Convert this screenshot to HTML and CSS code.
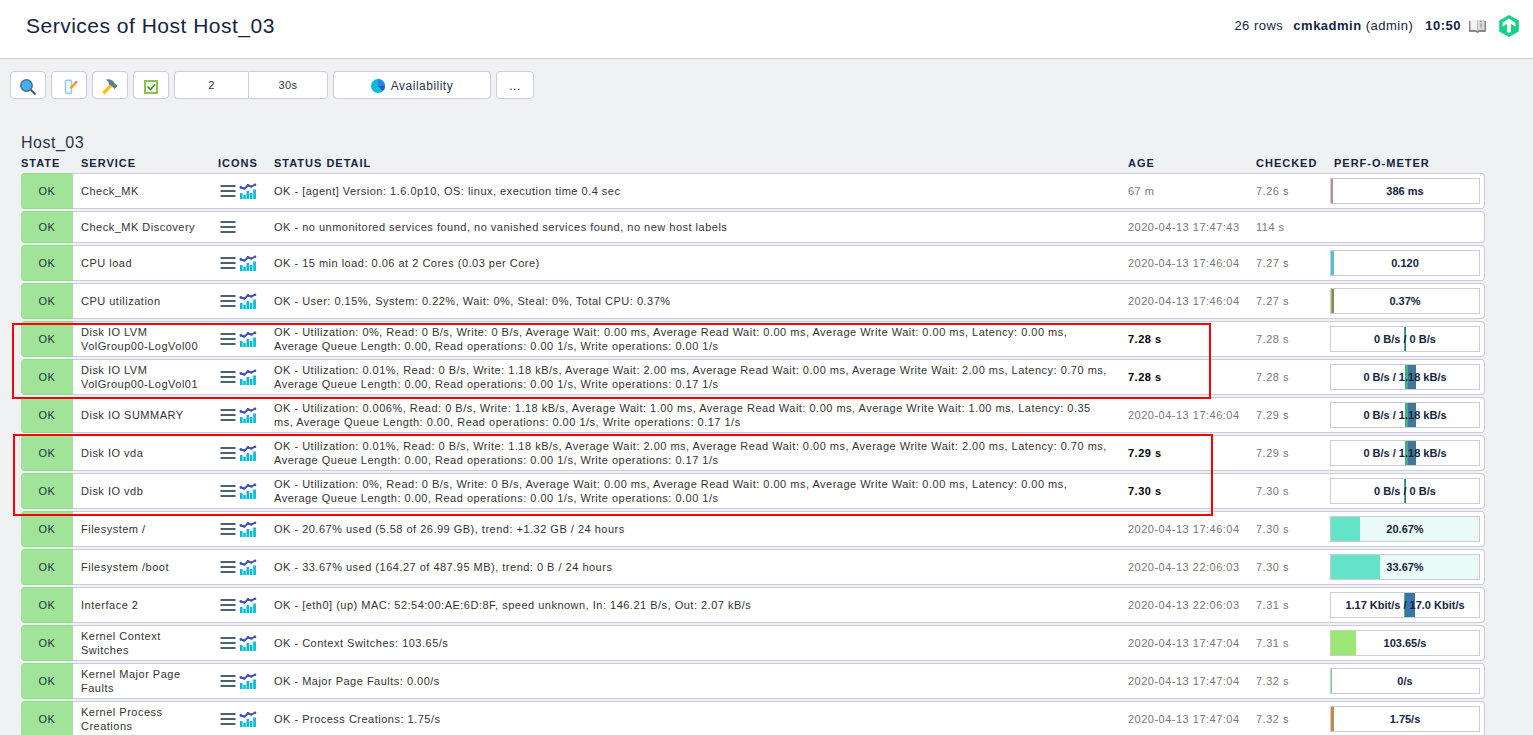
FILE: index.html
```html
<!DOCTYPE html>
<html lang="en">
<head>
<meta charset="utf-8">
<title>Services of Host Host_03</title>
<link rel="stylesheet" href="styles.css">
</head>
<body>
<svg class="sprite" aria-hidden="true">
  <symbol id="menu" viewBox="0 0 16 16"><path d="M0.5 3h15M0.5 8h15M0.5 13h15" stroke="#4b636e" stroke-width="2" fill="none"/></symbol>
  <symbol id="graph" viewBox="0 0 18 18"><path d="M1 11h2.600v6H1zM4.300 13h2.500v4H4.300zM7.500 9h2.600v8H7.500zM10.900 11h2.500v6h-2.500zM14.200 7.500h2.700v9.500h-2.700z" fill="#00bcd4"/><path d="M1.500 5.500l4 1L9 3.500l3.400 1L16.500 2.500" fill="none" stroke="#3f51b5" stroke-width="1.900"/><g fill="#3f51b5"><circle cx="1.800" cy="5.400" r="1.300"/><circle cx="5.300" cy="6.500" r="1.300"/><circle cx="9" cy="3.500" r="1.400"/><circle cx="12.400" cy="4.500" r="1.300"/><circle cx="16" cy="2.700" r="1.300"/></g></symbol>
</svg>
<div class="page">
<header class="topbar">
  <h1>Services of Host Host_03</h1>
  <div class="userinfo">
    <span class="rows">26 rows</span>
    <span class="user"><b>cmkadmin</b> (admin)</span>
    <b class="clock">10:50</b>
    <a href="#" class="manual" aria-label="Manual"><svg width="19" height="16" viewBox="0 0 19 16"><path d="M1 3h17v11h-7l-1 1H9l-1-1H1z" fill="#8a8a8a"/><path d="M2.500 1.500q4-.5 7 1v10q-3-1-7-.5z" fill="#f3f3f3"/><path d="M9.500 2.500q3-1.500 7-1V12q-4-.5-7 .5z" fill="#dcdcdc"/><path d="M12 3.500h2M13 5.500v4" stroke="#999" stroke-width="1.300"/><path d="M9.500 2.500v10" stroke="#bbb" stroke-width="1"/></svg></a>
    <a href="#" class="logo" aria-label="Checkmk"><svg width="20" height="22" viewBox="0 0 20 22"><path d="M10 0l9.800 5.500v11L10 22 .2 16.500v-11z" fill="#13d389"/><path d="M10 3.500l6.500 4.200v4l-4.500-3v8l-2 1.300-2-1.300v-8l-4.500 3v-4z" fill="#fff"/></svg></a>
  </div>
</header>
<nav class="toolbar" aria-label="View options">
  <button class="btn" type="button" aria-label="Filter"><svg width="18" height="18" viewBox="0 0 18 18"><path d="M11 11l5.500 5.500" stroke="#455a64" stroke-width="2"/><circle cx="7.500" cy="7.500" r="5.700" fill="#42b0f8" stroke="#546e7a" stroke-width="1.500"/></svg></button>
  <button class="btn" type="button" aria-label="Edit view"><svg width="18" height="18" viewBox="0 0 18 18"><rect x="5.500" y="2.200" width="6" height="13" rx="1" fill="#f1faff" stroke="#90cdf9" stroke-width="1.600"/><path d="M10.500 10.500l5-5.500" stroke="#ff9800" stroke-width="2.400"/><path d="M15.300 5.200l1.700-2" stroke="#c98a8a" stroke-width="2.400"/></svg></button>
  <button class="btn" type="button" aria-label="Commands"><svg width="18" height="18" viewBox="0 0 18 18"><path d="M2.500 15.300l7.500-8" stroke="#ffc107" stroke-width="3.400"/><path d="M5 1.500q6-1 8.500 3.500l3 3-3 3-3-3.200L8 6.500Q8 3.500 5 1.500z" fill="#607d8b"/></svg></button>
  <button class="btn" type="button" aria-label="Checkboxes"><svg width="18" height="18" viewBox="0 0 18 18"><rect x="3" y="3" width="12" height="12" fill="#f1f8e9" stroke="#8bc34a" stroke-width="2"/><path d="M5.500 8.500l3 3 4.500-5" fill="none" stroke="#43903e" stroke-width="1.600"/></svg></button>
  <div class="split">
    <button type="button">2</button>
    <button type="button">30s</button>
  </div>
  <button class="btn wide" type="button"><svg width="14" height="14" viewBox="0 0 14 14"><circle cx="7" cy="7" r="7" fill="#00bcd4"/><path d="M7 7V0a7 7 0 0 1 7 7z" fill="#1e88f5"/><path d="M7 7h7a7 7 0 0 1-2.100 5z" fill="#3f51b5"/></svg>Availability</button>
  <button class="btn more" type="button">...</button>
</nav>
<main class="content">
<h2>Host_03</h2>
<div class="listing">
<table>
<colgroup><col class="c-state"><col class="c-service"><col class="c-icons"><col><col class="c-age"><col class="c-checked"><col class="c-perf"></colgroup>
<thead><tr><th>State</th><th>Service</th><th>Icons</th><th>Status detail</th><th>Age</th><th>Checked</th><th>Perf-O-Meter</th></tr></thead>
<tbody>
<tr><td class="state">OK</td><td>Check_MK</td><td class="icons"><a href="#" aria-label="Menu"><svg><use href="#menu"/></svg></a><a href="#" aria-label="Graphs"><svg class="g"><use href="#graph"/></svg></a></td><td>OK - [agent] Version: 1.6.0p10, OS: linux, execution time 0.4 sec</td><td class="time">67 m</td><td class="time">7.26 s</td><td class="perf"><div class="meter"><i class="mauve" style="width:1.4%"></i><span>386 ms</span></div></td></tr>
<tr><td class="state">OK</td><td>Check_MK Discovery</td><td class="icons"><a href="#" aria-label="Menu"><svg><use href="#menu"/></svg></a></td><td>OK - no unmonitored services found, no vanished services found, no new host labels</td><td class="time">2020-04-13 17:47:43</td><td class="time">114 s</td><td class="perf"></td></tr>
<tr><td class="state">OK</td><td>CPU load</td><td class="icons"><a href="#" aria-label="Menu"><svg><use href="#menu"/></svg></a><a href="#" aria-label="Graphs"><svg class="g"><use href="#graph"/></svg></a></td><td>OK - 15 min load: 0.06 at 2 Cores (0.03 per Core)</td><td class="time">2020-04-13 17:46:04</td><td class="time">7.27 s</td><td class="perf"><div class="meter"><i class="sky" style="width:2%"></i><span>0.120</span></div></td></tr>
<tr><td class="state">OK</td><td>CPU utilization</td><td class="icons"><a href="#" aria-label="Menu"><svg><use href="#menu"/></svg></a><a href="#" aria-label="Graphs"><svg class="g"><use href="#graph"/></svg></a></td><td>OK - User: 0.15%, System: 0.22%, Wait: 0%, Steal: 0%, Total CPU: 0.37%</td><td class="time">2020-04-13 17:46:04</td><td class="time">7.27 s</td><td class="perf"><div class="meter"><i class="olive" style="width:0.7%"></i><i class="rust" style="width:0.7%"></i><i class="green" style="width:0.7%"></i><span>0.37%</span></div></td></tr>
<tr><td class="state">OK</td><td>Disk IO LVM VolGroup00-LogVol00</td><td class="icons"><a href="#" aria-label="Menu"><svg><use href="#menu"/></svg></a><a href="#" aria-label="Graphs"><svg class="g"><use href="#graph"/></svg></a></td><td>OK - Utilization: 0%, Read: 0 B/s, Write: 0 B/s, Average Wait: 0.00 ms, Average Read Wait: 0.00 ms, Average Write Wait: 0.00 ms, Latency: 0.00 ms, Average Queue Length: 0.00, Read operations: 0.00 1/s, Write operations: 0.00 1/s</td><td class="recent">7.28 s</td><td class="time">7.28 s</td><td class="perf"><div class="meter"><i style="width:49.3%"></i><i class="green" style="width:0.7%"></i><i class="blue" style="width:0.7%"></i><span>0 B/s / 0 B/s</span></div></td></tr>
<tr><td class="state">OK</td><td>Disk IO LVM VolGroup00-LogVol01</td><td class="icons"><a href="#" aria-label="Menu"><svg><use href="#menu"/></svg></a><a href="#" aria-label="Graphs"><svg class="g"><use href="#graph"/></svg></a></td><td>OK - Utilization: 0.01%, Read: 0 B/s, Write: 1.18 kB/s, Average Wait: 2.00 ms, Average Read Wait: 0.00 ms, Average Write Wait: 2.00 ms, Latency: 0.70 ms, Average Queue Length: 0.00, Read operations: 0.00 1/s, Write operations: 0.17 1/s</td><td class="recent">7.28 s</td><td class="time">7.28 s</td><td class="perf"><div class="meter"><i style="width:50%"></i><i class="green" style="width:2%"></i><i class="blue" style="width:5.4%"></i><span>0 B/s / 1.18 kB/s</span></div></td></tr>
<tr><td class="state">OK</td><td>Disk IO SUMMARY</td><td class="icons"><a href="#" aria-label="Menu"><svg><use href="#menu"/></svg></a><a href="#" aria-label="Graphs"><svg class="g"><use href="#graph"/></svg></a></td><td>OK - Utilization: 0.006%, Read: 0 B/s, Write: 1.18 kB/s, Average Wait: 1.00 ms, Average Read Wait: 0.00 ms, Average Write Wait: 1.00 ms, Latency: 0.35 ms, Average Queue Length: 0.00, Read operations: 0.00 1/s, Write operations: 0.17 1/s</td><td class="time">2020-04-13 17:46:04</td><td class="time">7.29 s</td><td class="perf"><div class="meter"><i style="width:50%"></i><i class="green" style="width:2%"></i><i class="blue" style="width:5.4%"></i><span>0 B/s / 1.18 kB/s</span></div></td></tr>
<tr><td class="state">OK</td><td>Disk IO vda</td><td class="icons"><a href="#" aria-label="Menu"><svg><use href="#menu"/></svg></a><a href="#" aria-label="Graphs"><svg class="g"><use href="#graph"/></svg></a></td><td>OK - Utilization: 0.01%, Read: 0 B/s, Write: 1.18 kB/s, Average Wait: 2.00 ms, Average Read Wait: 0.00 ms, Average Write Wait: 2.00 ms, Latency: 0.70 ms, Average Queue Length: 0.00, Read operations: 0.00 1/s, Write operations: 0.17 1/s</td><td class="recent">7.29 s</td><td class="time">7.29 s</td><td class="perf"><div class="meter"><i style="width:50%"></i><i class="green" style="width:2%"></i><i class="blue" style="width:5.4%"></i><span>0 B/s / 1.18 kB/s</span></div></td></tr>
<tr><td class="state">OK</td><td>Disk IO vdb</td><td class="icons"><a href="#" aria-label="Menu"><svg><use href="#menu"/></svg></a><a href="#" aria-label="Graphs"><svg class="g"><use href="#graph"/></svg></a></td><td>OK - Utilization: 0%, Read: 0 B/s, Write: 0 B/s, Average Wait: 0.00 ms, Average Read Wait: 0.00 ms, Average Write Wait: 0.00 ms, Latency: 0.00 ms, Average Queue Length: 0.00, Read operations: 0.00 1/s, Write operations: 0.00 1/s</td><td class="recent">7.30 s</td><td class="time">7.30 s</td><td class="perf"><div class="meter"><i style="width:49.3%"></i><i class="green" style="width:0.7%"></i><i class="blue" style="width:0.7%"></i><span>0 B/s / 0 B/s</span></div></td></tr>
<tr><td class="state">OK</td><td>Filesystem /</td><td class="icons"><a href="#" aria-label="Menu"><svg><use href="#menu"/></svg></a><a href="#" aria-label="Graphs"><svg class="g"><use href="#graph"/></svg></a></td><td>OK - 20.67% used (5.58 of 26.99 GB), trend: +1.32 GB / 24 hours</td><td class="time">2020-04-13 17:46:04</td><td class="time">7.30 s</td><td class="perf"><div class="meter disk"><i class="aqua" style="width:19.6%"></i><span>20.67%</span></div></td></tr>
<tr><td class="state">OK</td><td>Filesystem /boot</td><td class="icons"><a href="#" aria-label="Menu"><svg><use href="#menu"/></svg></a><a href="#" aria-label="Graphs"><svg class="g"><use href="#graph"/></svg></a></td><td>OK - 33.67% used (164.27 of 487.95 MB), trend: 0 B / 24 hours</td><td class="time">2020-04-13 22:06:03</td><td class="time">7.30 s</td><td class="perf"><div class="meter disk"><i class="aqua" style="width:33.1%"></i><span>33.67%</span></div></td></tr>
<tr><td class="state">OK</td><td>Interface 2</td><td class="icons"><a href="#" aria-label="Menu"><svg><use href="#menu"/></svg></a><a href="#" aria-label="Graphs"><svg class="g"><use href="#graph"/></svg></a></td><td>OK - [eth0] (up) MAC: 52:54:00:AE:6D:8F, speed unknown, In: 146.21 B/s, Out: 2.07 kB/s</td><td class="time">2020-04-13 22:06:03</td><td class="time">7.31 s</td><td class="perf"><div class="meter"><i style="width:49.3%"></i><i class="leaf" style="width:0.7%"></i><i class="azure" style="width:6.8%"></i><span>1.17 Kbit/s / 17.0 Kbit/s</span></div></td></tr>
<tr><td class="state">OK</td><td>Kernel Context Switches</td><td class="icons"><a href="#" aria-label="Menu"><svg><use href="#menu"/></svg></a><a href="#" aria-label="Graphs"><svg class="g"><use href="#graph"/></svg></a></td><td>OK - Context Switches: 103.65/s</td><td class="time">2020-04-13 17:47:04</td><td class="time">7.31 s</td><td class="perf"><div class="meter"><i class="lime" style="width:16.9%"></i><span>103.65/s</span></div></td></tr>
<tr><td class="state">OK</td><td>Kernel Major Page Faults</td><td class="icons"><a href="#" aria-label="Menu"><svg><use href="#menu"/></svg></a><a href="#" aria-label="Graphs"><svg class="g"><use href="#graph"/></svg></a></td><td>OK - Major Page Faults: 0.00/s</td><td class="time">2020-04-13 17:47:04</td><td class="time">7.32 s</td><td class="perf"><div class="meter"><i class="mint" style="width:0.7%"></i><span>0/s</span></div></td></tr>
<tr><td class="state">OK</td><td>Kernel Process Creations</td><td class="icons"><a href="#" aria-label="Menu"><svg><use href="#menu"/></svg></a><a href="#" aria-label="Graphs"><svg class="g"><use href="#graph"/></svg></a></td><td>OK - Process Creations: 1.75/s</td><td class="time">2020-04-13 17:47:04</td><td class="time">7.32 s</td><td class="perf"><div class="meter"><i class="copper" style="width:2%"></i><span>1.75/s</span></div></td></tr>
</tbody>
</table>
<div class="mark mark-lvm"></div>
<div class="mark mark-vd"></div>
</div>
</main>
</div>
</body>
</html>
```
FILE: styles.css
```css
* { box-sizing: border-box; }

body {
  margin: 0;
  background: #f0f1f3;
  color: #333;
  font: 11px/14px "Liberation Sans", Arial, sans-serif;
  letter-spacing: 0.045em;
}

.page {
  height: 100vh;
  overflow: hidden;
}

.sprite {
  position: absolute;
  width: 0;
  height: 0;
}

a { color: inherit; }

.topbar {
  display: flex;
  align-items: center;
  justify-content: space-between;
  height: 59px;
  padding: 0 14px 6px 26px;
  background: #fff;
  border-bottom: 1px solid #cccbdd;
  color: #15243f;
}

h1 {
  margin: 0;
  font-size: 21px;
  line-height: 24px;
  font-weight: 400;
}

.userinfo {
  display: flex;
  align-items: center;
  font-size: 13px;
  line-height: 16px;
}

.user { margin: 0 12px 0 10px; }
.manual { height: 16px; margin: 0 12px 0 7px; }
.logo { height: 22px; }

.toolbar {
  display: flex;
  gap: 5px;
  padding: 12px 10px 0;
}

button {
  margin: 0;
  padding: 0;
  background: #fff;
  border: 1px solid #cccbdd;
  color: #283449;
  font: inherit;
  letter-spacing: inherit;
}

.btn {
  display: flex;
  align-items: center;
  justify-content: center;
  width: 36px;
  height: 28px;
  padding-top: 4px;
  border-radius: 4px;
}

.btn.wide {
  gap: 6px;
  width: 158px;
  padding-top: 2px;
  font-size: 12px;
}

.btn.more {
  width: 38px;
  padding-top: 2px;
  font-size: 12px;
}

.split {
  display: flex;
  width: 154px;
  height: 28px;
}

.split button:first-child { width: 74px; border-radius: 4px 0 0 4px; border-right: 0; }
.split button:last-child { flex: 1; border-radius: 0 4px 4px 0; }

.content { padding: 34px 48px 0 21px; }

h2 {
  margin: 0;
  color: #283449;
  font-size: 16px;
  line-height: 20px;
  font-weight: 400;
}

.listing { position: relative; }

table {
  width: 100%;
  table-layout: fixed;
  border-collapse: separate;
  border-spacing: 0 2px;
}

.c-state { width: 52px; }
.c-service { width: 137px; }
.c-icons { width: 56px; }
.c-age { width: 128px; }
.c-checked { width: 78px; }
.c-perf { width: 159px; }

th {
  height: 16px;
  padding: 0 0 0 8px;
  color: #15243f;
  font-weight: 700;
  letter-spacing: 1px;
  text-align: left;
  text-transform: uppercase;
  white-space: nowrap;
}

th:first-child { padding-left: 0; }

td {
  height: 32px;
  padding: 3px 8px;
  background: #fff;
  border: 0 solid #cccbdd;
  border-width: 1px 0;
  vertical-align: middle;
}

.state {
  padding: 0;
  background: #a2e39a;
  border-color: #8fdc88;
  border-radius: 4px 0 0 4px;
  color: #1e3440;
  text-align: center;
}

.icons { padding: 0 0 0 10px; }
.icons a { display: inline-block; vertical-align: middle; }
.icons a + a { margin-left: 3px; }
.icons svg { display: block; width: 16px; height: 16px; }
.icons .g { width: 18px; height: 18px; }

.time {
  padding-right: 0;
  color: #777;
  white-space: nowrap;
}

.recent {
  color: #000;
  font-weight: 700;
}

.perf {
  padding: 4px;
  border-right-width: 1px;
  border-radius: 0 4px 4px 0;
}

.meter {
  position: relative;
  display: flex;
  height: 26px;
  border: 1px solid #ccc;
}

.meter span {
  position: absolute;
  inset: 0;
  color: #15243f;
  font-weight: 700;
  line-height: 24px;
  letter-spacing: 0;
  text-align: center;
}

.disk { background: #eafaf6; }
.mauve { background: #b78ba5; }
.sky { background: #55bcd2; }
.green { background: #46ac86; }
.olive { background: #9dba6a; }
.rust { background: #d9602f; }
.blue { background: #437799; }
.aqua { background: #63e3c8; }
.leaf { background: #3fbf74; }
.azure { background: #3876a8; }
.lime { background: #9be877; }
.mint { background: #60d8a0; }
.copper { background: #c8854f; }

.mark {
  position: absolute;
  border: 2px solid #f00;
  pointer-events: none;
}

.mark-lvm {
  top: 170px;
  right: 274px;
  left: -9px;
  height: 76px;
}

.mark-vd {
  top: 281px;
  right: 272px;
  left: -8px;
  height: 82px;
}
```
